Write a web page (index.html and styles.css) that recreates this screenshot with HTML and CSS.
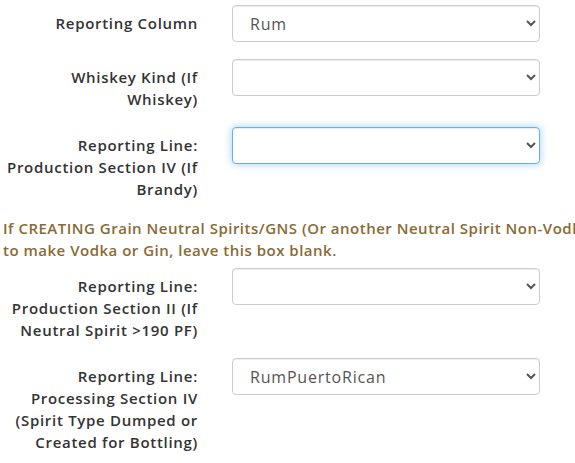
FILE: index.html
```html
<!DOCTYPE html>
<html lang="en">
<head>
<meta charset="UTF-8">
<meta name="viewport" content="width=device-width, initial-scale=1.0">
<title>Spirit Reporting</title>
<link rel="stylesheet" href="styles.css">
</head>
<body>
<form class="report-form">
    <div class="form-group">
        <label class="form-label" for="reportingColumn">Reporting Column</label>
        <div class="form-field">
            <select id="reportingColumn" class="form-control">
                <option>Rum</option>
            </select>
        </div>
    </div>

    <div class="form-group">
        <label class="form-label" for="whiskeyKind">Whiskey Kind (If Whiskey)</label>
        <div class="form-field">
            <select id="whiskeyKind" class="form-control">
                <option></option>
            </select>
        </div>
    </div>

    <div class="form-group">
        <label class="form-label" for="prodSection4">Reporting Line: Production Section IV (If Brandy)</label>
        <div class="form-field">
            <select id="prodSection4" class="form-control is-focused">
                <option></option>
            </select>
        </div>
    </div>

    <p class="form-note">If CREATING Grain Neutral Spirits/GNS (Or another Neutral Spirit Non-Vodka) to make Vodka or Gin, leave this box blank.</p>

    <div class="form-group">
        <label class="form-label" for="prodSection2">Reporting Line: Production Section II (If Neutral Spirit &gt;190 PF)</label>
        <div class="form-field">
            <select id="prodSection2" class="form-control">
                <option></option>
            </select>
        </div>
    </div>

    <div class="form-group">
        <label class="form-label" for="procSection4">Reporting Line: Processing Section IV (Spirit Type Dumped or Created for Bottling)</label>
        <div class="form-field">
            <select id="procSection4" class="form-control">
                <option>RumPuertoRican</option>
            </select>
        </div>
    </div>
</form>
</body>
</html>
```

FILE: styles.css
```css
body {
    font-family: "Open Sans", Arial, sans-serif;
    font-size: 15px;
    line-height: 22px;
    color: #333;
    background-color: #fff;
    margin: 0;
    padding: 0;
    overflow: hidden;
}

.report-form {
    width: 620px;
    padding-top: 5px;
}

.form-group {
    display: grid;
    grid-template-columns: 192px 308px;
    column-gap: 34px;
    padding-left: 6px;
    margin-bottom: 17px;
    align-items: start;
}

.form-label {
    text-align: right;
    font-weight: 600;
    letter-spacing: .7px;
    padding-top: 7px;
}

.form-control {
    display: block;
    width: 100%;
    height: 37px;
    padding: 0 6px 0 13px;
    font-family: inherit;
    font-size: 16px;
    letter-spacing: .8px;
    color: #555;
    background-color: #fff;
    border: 1px solid #ccc;
    border-radius: 4px;
    box-shadow: inset 0 1px 1px rgba(0, 0, 0, .075);
    outline: none;
}

.form-control.is-focused {
    border-color: #66afe9;
    box-shadow: inset 0 1px 1px rgba(0, 0, 0, .075), 0 0 8px rgba(102, 175, 233, .6);
}

.form-note {
    margin: 0 0 7px 3px;
    width: 606px;
    color: #8a6a34;
    font-weight: 600;
    letter-spacing: .5px;
}
```
